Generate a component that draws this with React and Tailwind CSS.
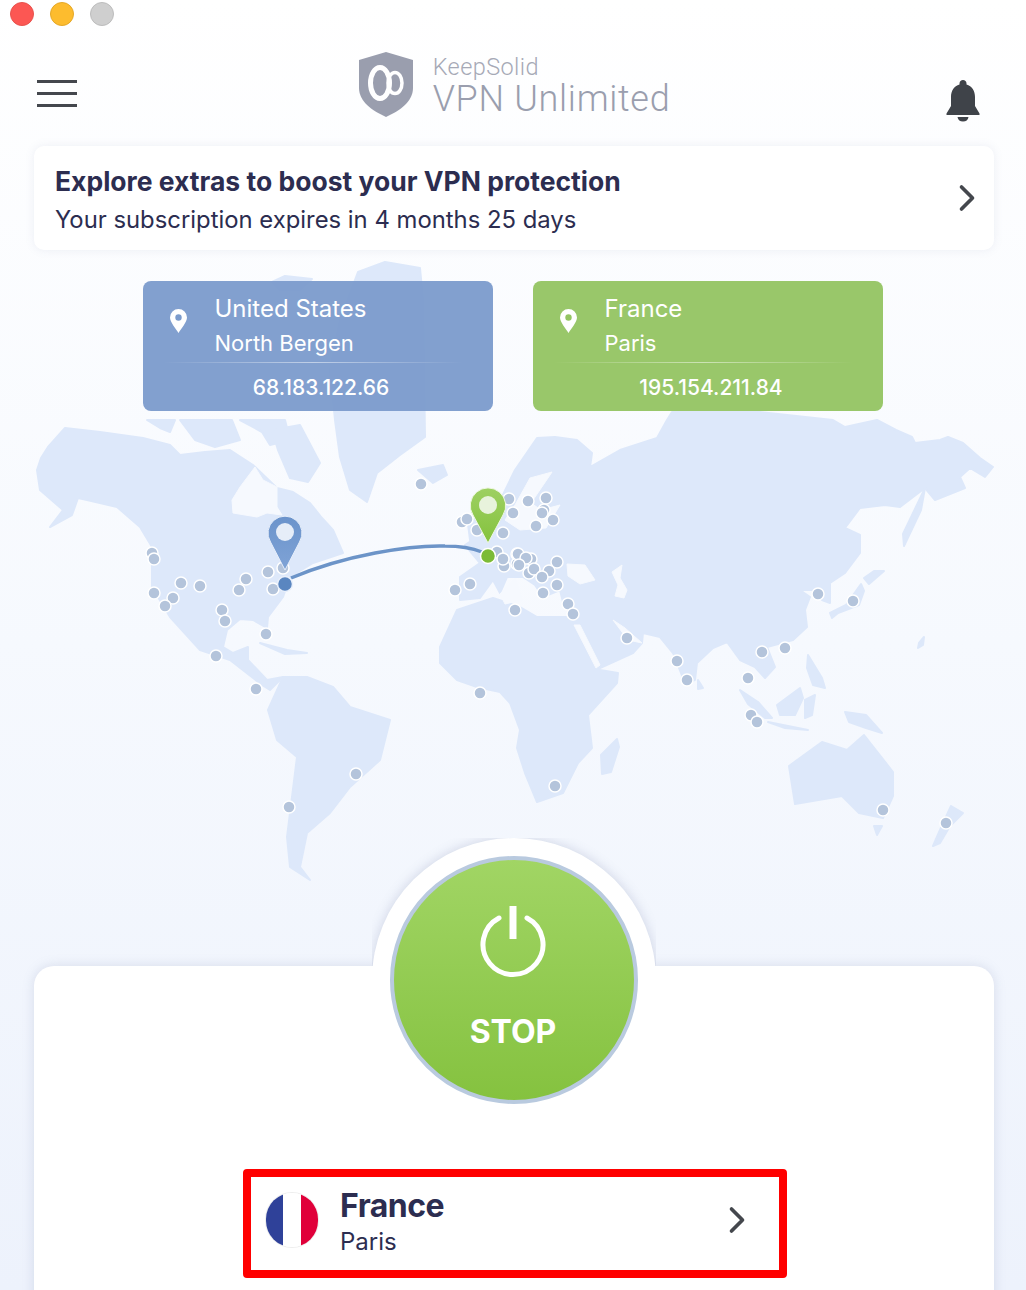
import { ChevronRight } from "lucide-react";

// land shapes, in page coordinates
const land = [
  // north america
  "37,470 41,458 48,447 65,428 100,432 143,438 170,445 180,455 205,452 230,450 253,465 277,488 293,492 310,503 322,518 333,530 343,553 313,563 290,577 283,597 268,617 267,628 253,620 240,619 227,630 223,647 233,653 248,647 248,660 267,680 283,677 270,690 262,685 230,660 200,650 170,617 152,587 152,547 140,527 117,507 87,500 78,498 72,515 50,527 63,510 40,490",
  // arctic islands
  "147,420 175,420 170,432 160,428",
  "180,420 232,420 240,440 215,447 195,440",
  "240,420 285,420 290,440 270,445 262,432",
  "272,430 300,425 320,463 308,482 290,478 278,450",
  "272,282 285,276 312,279 300,290 280,290",
  // greenland
  "358,272 385,262 420,268 423,300 425,437 400,455 377,473 367,502 350,490 340,457 335,420 330,370 340,320",
  "418,470 443,465 447,475 433,483",
  // eurasia
  "537,438 555,437 577,440 592,453 590,467 620,450 657,438 667,420 672,412 760,412 833,420 845,427 877,420 896,430 912,437 915,443 940,440 948,437 963,443 980,458 993,467 985,477 970,468 960,477 965,488 935,500 925,488 900,507 885,505 860,508 845,528 860,535 860,553 845,573 830,583 830,603 822,600 815,590 800,590 810,597 805,610 807,627 793,640 767,647 775,667 765,678 755,667 740,660 727,642 713,648 697,663 695,680 685,683 673,653 660,637 643,633 642,643 633,653 600,668 575,627 572,617 563,602 560,590 543,597 535,585 523,577 507,577 500,593 493,580 480,598 460,600 460,577 480,563 465,545 480,535 500,525 498,505 515,470",
  // africa
  "440,647 457,610 493,598 520,607 537,617 572,617 585,645 600,670 618,673 617,683 588,715 592,748 578,763 563,793 537,802 525,773 517,748 520,730 510,703 500,692 477,687 457,680 440,663",
  "617,739 619,747 611,772 602,774 601,755",
  // south america
  "283,677 307,677 333,687 350,707 390,720 380,760 350,787 330,813 307,833 300,867 310,880 290,867 287,837 297,757 277,740 268,710",
  // asia pacific islands
  "830,613 846,605 861,584 864,591 859,605 838,613 832,618",
  "864,578 874,571 884,571 869,584",
  "903,534 925,488 921,510 904,546",
  "698,680 703,688 698,689",
  "777,705 800,688 803,698 795,715 780,715",
  "740,690 758,702 772,718 765,718 748,704",
  "768,722 808,730 785,728",
  "808,655 822,678 825,688 813,685 807,668",
  "805,700 815,695 812,715 805,718",
  "845,712 866,715 882,733 866,728 849,722",
  "919,643 924,637 923,645 918,648",
  // australia and new zealand
  "789,766 822,742 847,750 864,735 893,772 893,796 883,818 859,813 842,796 795,804",
  "874,826 882,826 877,835",
  "951,806 963,813 950,826 940,843 933,846 940,830",
  // uk and cuba
  "468,524 476,518 480,535 470,540",
  "260,643 287,650 307,653 285,654",
];

// seas cut out of the land
const seas = [
  "232,500 240,487 255,467 263,480 277,487 277,507 282,515 267,513 257,517 233,513",
  "552,472 548,478 531,503 541,510 560,505 546,528 520,530 505,520 515,505 530,478",
  "567,564 585,565 595,580 580,584 568,576",
  "612,572 622,565 620,578 627,590 624,598 615,596 618,585",
  "613,620 625,628 642,643 628,640",
  "574,625 580,625 600,665 596,668",
  "500,594 515,578 522,600 505,604",
];

const dots = [
  [152,553],[154,559],[154,593],[181,583],[200,586],[173,598],[165,606],[246,579],[239,590],[268,572],[283,568],[273,589],
  [222,610],[225,621],[266,634],[216,656],[256,689],[421,484],[470,584],[455,590],[515,610],[480,693],[356,774],[289,807],
  [462,522],[467,519],[477,530],[509,499],[513,513],[503,533],[497,552],[504,566],[503,559],[517,554],[517,564],
  [528,501],[546,498],[544,510],[542,513],[553,520],[536,526],[518,554],[531,559],[526,558],[519,565],[529,573],[534,569],
  [549,571],[557,562],[542,577],[557,585],[543,593],[568,604],[573,614],[627,638],[677,661],[687,680],[762,652],[785,648],
  [818,594],[853,601],[748,678],[751,715],[757,722],[555,786],[883,810],[946,823],
];

function WorldMap() {
  return (
    <svg className="absolute left-0 top-0" width="1026" height="1290" viewBox="0 0 1026 1290">
      <defs>
        <linearGradient id="bluePin" x1="0" y1="0" x2="0" y2="1">
          <stop offset="0" stopColor="#6b93cb" />
          <stop offset="1" stopColor="#7fa3d6" />
        </linearGradient>
        <linearGradient id="greenPin" x1="0" y1="0" x2="0" y2="1">
          <stop offset="0" stopColor="#9ed062" />
          <stop offset="1" stopColor="#84c23d" />
        </linearGradient>
      </defs>
      {land.map((p) => (
        <polygon key={p} points={p} fill="#dde8fa" stroke="#dde8fa" strokeWidth="2" strokeLinejoin="round" />
      ))}
      {seas.map((p) => (
        <polygon key={p} points={p} fill="#f6f9fe" stroke="#f6f9fe" strokeWidth="1" strokeLinejoin="round" />
      ))}
      <path d="M291 578 C345 555 410 545 445 546 C460 546 472 548 482 552" fill="none" stroke="#6c94c8" strokeWidth="3.5" />
      {dots.map(([x, y]) => (
        <circle key={`${x}-${y}`} cx={x} cy={y} r="6" fill="#b4c4db" stroke="#ffffff" strokeWidth="1.5" />
      ))}
      <circle cx="285" cy="584" r="7.5" fill="#5a86c0" stroke="#e9f0fb" strokeWidth="1.5" />
      <circle cx="488" cy="556" r="7.5" fill="#7cbb36" stroke="#ffffff" strokeWidth="1.5" />
      <path d="M285 570 L270.500 542 A17 17 0 1 1 299.500 542 Z" fill="url(#bluePin)" stroke="#e6eefa" strokeWidth="1" strokeLinejoin="round" />
      <circle cx="285" cy="532" r="9" fill="#e6edf8" />
      <path d="M488 543 L473 515 A17.700 17.700 0 1 1 503 515 Z" fill="url(#greenPin)" stroke="#eef7e2" strokeWidth="1" strokeLinejoin="round" />
      <circle cx="488" cy="505" r="9" fill="#e8f3dc" />
    </svg>
  );
}

function LocationCard({ color, country, city, ip }) {
  return (
    <div className={`w-[350px] h-[130px] rounded-[8px] pl-[72px] pr-[22px] relative ${color}`}>
      <svg className="absolute left-[27px] top-[28px]" width="17" height="24" viewBox="0 0 17 24">
        <path d="M8.5 0A8.5 8.5 0 0 1 17 8.5C17 13 11 20 8.5 24 6 20 0 13 0 8.5A8.5 8.5 0 0 1 8.5 0Z" fill="#ffffff" />
        <circle cx="8.5" cy="8.5" r="3.2" fill={country === "France" ? "#93c462" : "#7b9bcc"} />
      </svg>
      <p className="text-[24px] leading-[30px] pt-[13px] text-white">{country}</p>
      <p className="text-[22px] leading-[30px] pt-[4px] text-white">{city}</p>
      <div className="absolute left-[20px] right-[30px] top-[81px] h-px bg-gradient-to-r from-transparent via-white/50 to-transparent" />
      <p className="absolute left-0 right-0 top-[93px] pl-[7px] text-center text-[21px] leading-[28px] font-medium text-white">{ip}</p>
    </div>
  );
}

export default function App() {
  return (
    <div className="relative w-[1026px] h-[1290px] overflow-hidden bg-gradient-to-b from-white via-[#f6f9fe] to-[#edf2fc] font-['Inter',sans-serif] text-[#2c2d50]">
      <WorldMap />

      <div className="relative flex flex-col">
        {/* window buttons */}
        <div className="flex gap-[16px] pl-[10px] pt-[2px]">
          <span className="w-[24px] h-[24px] rounded-full bg-[#fc5753] border border-[#e8524c]" />
          <span className="w-[24px] h-[24px] rounded-full bg-[#fdbc2e] border border-[#e5a827]" />
          <span className="w-[24px] h-[24px] rounded-full bg-[#cfcfcf] border border-[#bdbdbd]" />
        </div>

        {/* header */}
        <div className="h-[120px] flex items-center justify-between pl-[37px] pr-[46px]">
          <div className="flex flex-col gap-[9px] mt-[14px]">
            <span className="block w-[40px] h-[3px] bg-[#44474d]" />
            <span className="block w-[40px] h-[3px] bg-[#44474d]" />
            <span className="block w-[40px] h-[3px] bg-[#44474d]" />
          </div>
          <div className="flex items-center gap-[20px] -mt-[4px] ml-[6px]">
            <svg width="54" height="65" viewBox="0 0 54 65">
              <path d="M27 0L54 8V36C54 50 40 59 27 65C14 59 0 50 0 36V8Z" fill="#9a9eae" />
              <ellipse cx="21" cy="31" rx="9.5" ry="15.5" fill="none" stroke="#ffffff" strokeWidth="5" />
              <ellipse cx="36" cy="31" rx="7" ry="10.5" fill="none" stroke="#ffffff" strokeWidth="3.5" />
            </svg>
            <div className="flex flex-col pt-[4px]">
              <span className="text-[23.500px] leading-[26px] tracking-[0.4px] font-['Roboto',sans-serif] font-light text-[#a6a9b6]">KeepSolid</span>
              <span className="text-[36px] leading-[38px] font-['Roboto',sans-serif] font-light tracking-[0.7px] text-[#9a9eae]">VPN Unlimited</span>
            </div>
          </div>
          <svg className="mt-[30px]" width="34" height="42" viewBox="0 0 34 42">
            <path d="M17 0C19 0 20.500 1.500 20.500 3.500V4.500C26 6 29 11 29 17V26L33.500 33.500V35H0.500V33.500L5 26V17C5 11 8 6 13.500 4.500V3.500C13.500 1.500 15 0 17 0Z" fill="#3f4349" />
            <path d="M11.500 37H22.500C22 40 20 41.500 17 41.500C14 41.500 12 40 11.500 37Z" fill="#3f4349" />
          </svg>
        </div>

        {/* extras banner */}
        <div className="ml-[34px] mr-[32px] h-[104px] rounded-[10px] bg-white shadow-[0_0_10px_rgba(120,130,170,0.12)] flex items-center justify-between pl-[21px] pr-[5px]">
          <div className="mt-[6px]">
            <p className="text-[26.500px] leading-[34px] font-bold -mt-[1px]">Explore extras to boost your VPN protection</p>
            <p className="text-[23.850px] leading-[34px] mt-[5px]">Your subscription expires in 4 months 25 days</p>
          </div>
          <ChevronRight className="w-[44px] h-[44px] text-[#44474d]" strokeWidth={2} />
        </div>

        {/* connection cards */}
        <div className="flex justify-center gap-[40px] mt-[31px] pr-[1px]">
          <LocationCard color="bg-[#7b9bcc]/95" country="United States" city="North Bergen" ip="68.183.122.66" />
          <LocationCard color="bg-[#93c462]/95" country="France" city="Paris" ip="195.154.211.84" />
        </div>

        {/* bottom panel */}
        <div className="relative ml-[34px] mr-[32px] mt-[555px] h-[400px] rounded-t-[20px] bg-white shadow-[0_0_12px_rgba(120,130,170,0.22)] flex flex-col items-center">
          <div className="absolute left-[338px] -top-[128px] w-[284px] h-[128px] overflow-hidden">
            <div className="w-[284px] h-[284px] rounded-full bg-white shadow-[0_0_12px_rgba(120,130,170,0.3)]" />
          </div>

          <button className="relative -mt-[110px] w-[248px] h-[248px] shrink-0 rounded-full border-[4px] border-[#b9cadf] bg-gradient-to-b from-[#a1d564] to-[#85c23f] flex flex-col items-center text-white">
            <svg className="mt-[44px] -ml-[2px]" width="68" height="76" viewBox="0 0 68 76">
              <path d="M20 14A30 30 0 1 0 48 14" fill="none" stroke="#ffffff" strokeWidth="5" strokeLinecap="round" />
              <path d="M34 2V35" fill="none" stroke="#ffffff" strokeWidth="7" />
            </svg>
            <span className="mt-[32px] -ml-[2px] text-[32px] leading-[40px] font-bold">STOP</span>
          </button>

          {/* selected location */}
          <div className="mt-[65px] ml-[2px] w-[544px] h-[109px] shrink-0 rounded-[4px] border-[8px] border-[#ff0000] flex items-center pl-[14px] pr-[20px]">
            <div className="w-[54px] h-[56px] -mt-[8px] rounded-full overflow-hidden flex shrink-0 border border-[#eeeeee]">
              <span className="w-[18px] bg-[#2f4199]" />
              <span className="w-[18px] bg-white" />
              <span className="w-[18px] bg-[#e0003a]" />
            </div>
            <div className="ml-[21px] -mt-[4px] grow">
              <p className="text-[32px] leading-[38px] font-bold tracking-[-0.5px]">France</p>
              <p className="text-[24px] leading-[30px] mt-[2px]">Paris</p>
            </div>
            <ChevronRight className="w-[44px] h-[44px] -mt-[7px] text-[#44474d]" strokeWidth={2} />
          </div>
        </div>
      </div>
    </div>
  );
}
